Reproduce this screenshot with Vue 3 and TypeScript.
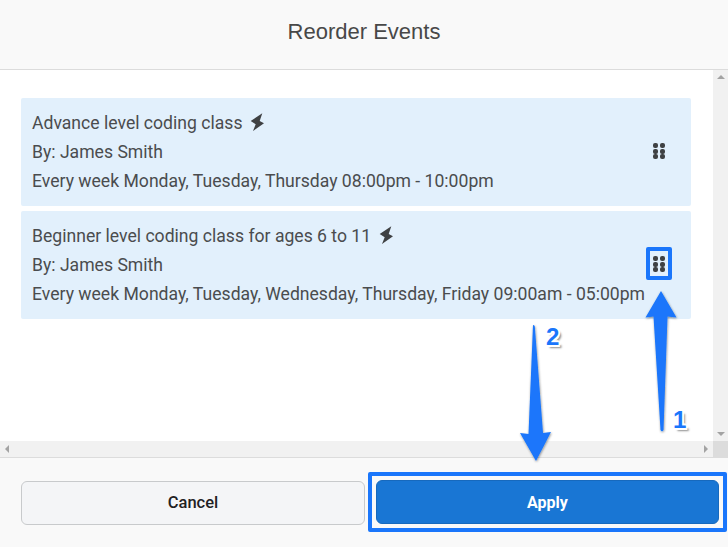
<template>
  <div class="dialog">
    <header class="dialog-header">Reorder Events</header>

    <div class="scroll-area">
      <div class="scroll-content">
        <div v-for="item in events" :key="item.title" class="event-card">
          <div class="event-info">
            <div class="event-line">
              {{ item.title }}
              <svg class="bolt" viewBox="0 0 16 18" width="16" height="18">
                <path d="M13.3 .3 1.7 8 6.7 11.3 4 18 15 10.3 10.7 8Z" fill="#3f4143" />
              </svg>
            </div>
            <div class="event-line">By: {{ item.by }}</div>
            <div class="event-line">{{ item.schedule }}</div>
          </div>
          <div class="drag-handle">
            <i v-for="n in 6" :key="n" class="dot" />
          </div>
        </div>
      </div>

      <div class="scrollbar-right">
        <i class="tri tri-up" />
        <i class="tri tri-down" />
      </div>
      <div class="scrollbar-bottom">
        <i class="tri tri-left" />
        <i class="tri tri-right" />
      </div>
      <div class="scroll-corner" />
    </div>

    <footer class="dialog-footer">
      <button class="btn btn-cancel">Cancel</button>
      <button class="btn btn-apply">Apply</button>
    </footer>

    <!-- annotations drawn over the screenshot -->
    <div class="mark mark-handle" />
    <div class="mark mark-apply" />
    <svg class="arrows" width="728" height="547" viewBox="0 0 728 547">
      <defs>
        <filter id="arrow-shadow" x="-40%" y="-10%" width="180%" height="120%">
          <feDropShadow dx="0.5" dy="1" stdDeviation="1.2" flood-color="#000" flood-opacity="0.45" />
        </filter>
      </defs>
      <path
        d="M661 291 L676.5 317.5 L667.5 316.5 L663.5 430 Q662 432.5 660.5 430 L653.5 316.5 L645.5 317.5 Z"
        fill="#1a76fb"
        filter="url(#arrow-shadow)"
      />
      <path
        d="M533 325.5 Q532.9 325 533.4 325 Q534.6 325 534.8 326.5 L543 433 L551 432 L536 461 L520 433 L528.5 434 Z"
        fill="#1a76fb"
        filter="url(#arrow-shadow)"
      />
    </svg>
    <span class="step step-one">1</span>
    <span class="step step-two">2</span>
  </div>
</template>

<script setup lang="ts">
interface ClassEvent {
  title: string;
  by: string;
  schedule: string;
}

const events: ClassEvent[] = [
  {
    title: "Advance level coding class",
    by: "James Smith",
    schedule: "Every week Monday, Tuesday, Thursday 08:00pm - 10:00pm",
  },
  {
    title: "Beginner level coding class for ages 6 to 11",
    by: "James Smith",
    schedule: "Every week Monday, Tuesday, Wednesday, Thursday, Friday 09:00am - 05:00pm",
  },
];
</script>

<style scoped>
.dialog {
  position: relative;
  width: 728px;
  height: 547px;
  display: flex;
  flex-direction: column;
  overflow: hidden;
  background: #fff;
  font-family: Roboto, "Liberation Sans", sans-serif;
}

.dialog-header {
  flex: none;
  display: flex;
  align-items: center;
  justify-content: center;
  height: 64px;
  padding-bottom: 5px;
  background: #f9f9f9;
  border-bottom: 1px solid #dcdcdc;
  font-family: "Liberation Sans", Arial, sans-serif;
  font-size: 22px;
  color: #484848;
}

.scroll-area {
  position: relative;
  height: 387px;
  flex: none;
  background: #fff;
}

.scroll-content {
  display: flex;
  flex-direction: column;
  gap: 5px;
  padding: 28px 37px 0 21px;
}

.event-card {
  height: 108px;
  box-sizing: border-box;
  display: flex;
  align-items: center;
  justify-content: space-between;
  padding: 0 26px 0 11px;
  background: #e2f0fc;
  border-radius: 2px;
}

.event-line {
  height: 29px;
  display: flex;
  align-items: center;
  gap: 7px;
  font-size: 17.6px;
  color: #4a4c4e;
  white-space: nowrap;
}

.bolt {
  flex: none;
  margin-top: -2px;
}

.drag-handle {
  flex: none;
  display: grid;
  grid-template-columns: repeat(2, 5px);
  grid-auto-rows: 5px;
  gap: 0.5px 2px;
  margin-bottom: 2px;
}

.dot {
  display: block;
  border-radius: 40%;
  background: #3f4143;
}

.scrollbar-right {
  position: absolute;
  top: 0;
  right: 0;
  bottom: 16px;
  width: 15px;
  background: #f1f1f1;
}

.scrollbar-bottom {
  position: absolute;
  left: 0;
  right: 15px;
  bottom: 0;
  height: 16px;
  background: #f1f1f1;
}

.scroll-corner {
  position: absolute;
  right: 0;
  bottom: 0;
  width: 15px;
  height: 16px;
  background: #dcdcdc;
}

.tri {
  position: absolute;
  width: 0;
  height: 0;
  border-style: solid;
  border-color: transparent;
}

.tri-up {
  top: 5px;
  left: 4px;
  border-width: 0 4px 4px;
  border-bottom-color: #a3a3a3;
}

.tri-down {
  bottom: 5px;
  left: 4px;
  border-width: 4px 4px 0;
  border-top-color: #a3a3a3;
}

.tri-left {
  left: 5px;
  top: 4px;
  border-width: 4px 4px 4px 0;
  border-right-color: #a3a3a3;
}

.tri-right {
  right: 5px;
  top: 4px;
  border-width: 4px 0 4px 4px;
  border-left-color: #a3a3a3;
}

.dialog-footer {
  flex: 1;
  display: flex;
  gap: 11px;
  padding: 23px 9px 0 21px;
  background: #f9f9f9;
  border-top: 1px solid #dcdcdc;
}

.btn {
  width: 344px;
  height: 44px;
  box-sizing: border-box;
  border-radius: 6px;
  font-family: Roboto, "Liberation Sans", sans-serif;
  font-size: 16px;
  font-weight: 500;
  cursor: pointer;
}

.btn-cancel {
  padding-bottom: 3px;
  background: #f4f5f7;
  border: 1px solid #c8cacc;
  color: #1f2123;
  font-size: 16.5px;
}

.btn-apply {
  width: 343px;
  margin-top: -1px;
  background: #1976d4;
  border: 1px solid #1769bd;
  color: #fff;
  font-weight: 700;
}

.mark {
  position: absolute;
  box-sizing: border-box;
  border: 4px solid #1a76fb;
  border-radius: 2px;
}

.mark-handle {
  left: 646px;
  top: 247px;
  width: 26px;
  height: 33px;
}

.mark-apply {
  left: 368px;
  top: 472px;
  width: 359px;
  height: 60px;
}

.arrows {
  position: absolute;
  left: 0;
  top: 0;
  pointer-events: none;
}

.step {
  position: absolute;
  font-family: "Liberation Sans", Arial, sans-serif;
  font-size: 24px;
  font-weight: 700;
  line-height: 24px;
  color: #1a76fb;
  text-shadow:
    -2px 0 0 #fff, 2px 0 0 #fff, 0 -2px 0 #fff, 0 2px 0 #fff,
    -1.5px -1.5px 0 #fff, 1.5px -1.5px 0 #fff, -1.5px 1.5px 0 #fff, 1.5px 1.5px 0 #fff,
    3px 3px 2px rgba(0, 0, 0, 0.45);
}

.step-one {
  left: 673px;
  top: 408px;
}

.step-two {
  left: 546px;
  top: 325px;
}
</style>

<style>
html,
body {
  margin: 0;
  background: #fff;
}
</style>
